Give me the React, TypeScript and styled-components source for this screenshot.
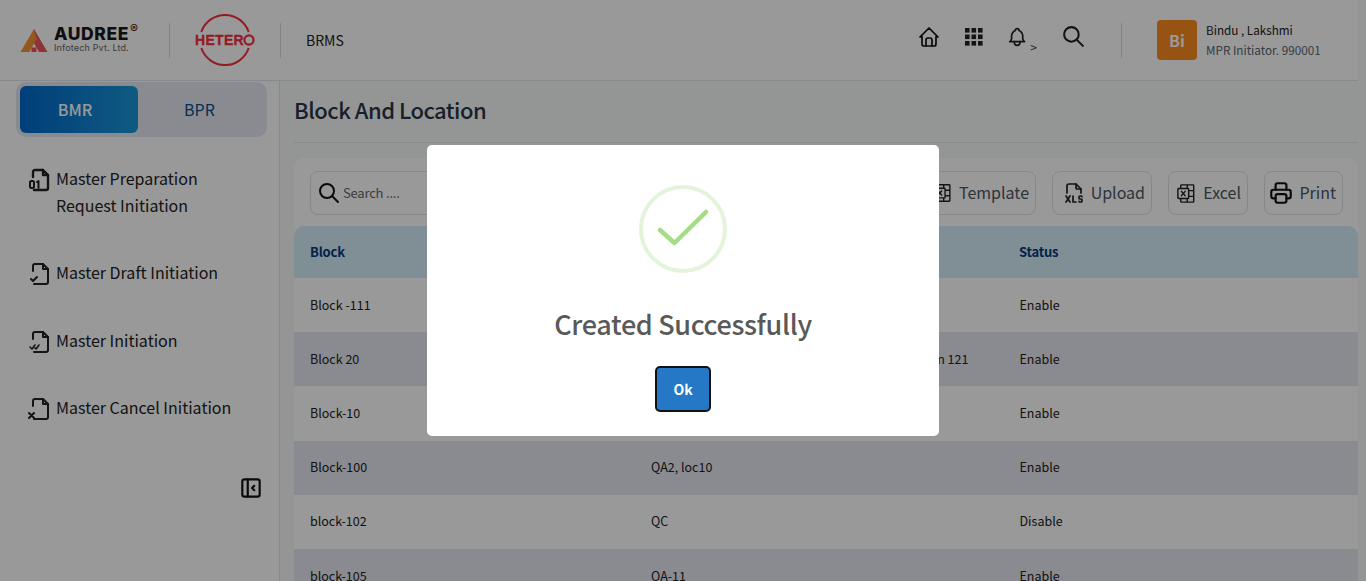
import { FC, ReactNode } from 'react';
import styled, { createGlobalStyle } from 'styled-components';
import { PiMicrosoftExcelLogo } from 'react-icons/pi';
import {
  TbBell,
  TbFileTypeXls,
  TbHome,
  TbLayoutSidebarLeftCollapse,
  TbPrinter,
  TbSearch,
} from 'react-icons/tb';

const rows = [
  { block: 'Block -111', location: 'QA', status: 'Enable' },
  { block: 'Block 20', location: 'Granulation Area , Packing Manufacturing Location 121', status: 'Enable' },
  { block: 'Block-10', location: 'QA-10', status: 'Enable' },
  { block: 'Block-100', location: 'QA2, loc10', status: 'Enable' },
  { block: 'block-102', location: 'QC', status: 'Disable' },
  { block: 'block-105', location: 'QA-11', status: 'Enable' },
];

const FileIcon: FC<{ children?: ReactNode; weight?: number }> = ({ children, weight = 2 }) => (
  <svg width="24" height="24" viewBox="0 0 24 24" fill="none" stroke="#222" strokeWidth={weight} strokeLinecap="round" strokeLinejoin="round">
    <path d="M5 9V4a2 2 0 0 1 2-2h8l5 5v13a2 2 0 0 1-2 2H6" />
    <path d="M15 2v5h5" />
    {children}
  </svg>
);

const AudreeLogo = () => (
  <svg width="28" height="25" viewBox="0 0 28 25">
    <path d="M14 1 L27.5 24 H19 L11 10 Z" fill="#f0565c" />
    <path d="M14 1 L0.5 24 H9.5 L16.5 11 Z" fill="#f59331" />
    <rect x="11.5" y="19.5" width="5" height="4.5" fill="#f0565c" />
  </svg>
);

const HeteroLogo = () => (
  <svg width="62" height="52" viewBox="0 0 62 52">
    <path d="M7.3 18 A25 25 0 0 1 54.7 18" fill="none" stroke="#f5303c" strokeWidth="2" />
    <path d="M7.3 34 A25 25 0 0 0 54.7 34" fill="none" stroke="#f5303c" strokeWidth="2" />
    <circle cx="55" cy="26" r="4.6" fill="none" stroke="#f5303c" strokeWidth="2.2" />
    <text x="1" y="31" fontFamily="Liberation Sans" fontWeight="700" fontSize="14" letterSpacing="0.3" stroke="#f5303c" strokeWidth="0.3" fill="#f5303c">HETER</text>
  </svg>
);

const GridIcon = () => (
  <svg width="18" height="18" viewBox="0 0 18 18" fill="#222">
    {[0, 6.5, 13].map(y =>
      [0, 6.5, 13].map(x => <rect key={`${x}-${y}`} x={x} y={y} width="4.6" height="4.6" />),
    )}
  </svg>
);

export default function App() {
  return (
    <>
      <GlobalStyle />
      <Page>
        <Header>
          <BrandCell>
            <AudreeLogo />
            <BrandText>
              <BrandName>
                AUDREE<BrandMark>®</BrandMark>
              </BrandName>
              <BrandSub>Infotech Pvt. Ltd.</BrandSub>
            </BrandText>
          </BrandCell>
          <HeteroCell>
            <HeteroLogo />
          </HeteroCell>
          <AppName>BRMS</AppName>
          <HeaderIcons>
            <TbHome size={24} color="#111" strokeWidth={1.7} />
            <GridIcon />
            <BellWrap>
              <TbBell size={26} color="#222" strokeWidth={1.8} />
              <BellCaret>&gt;</BellCaret>
            </BellWrap>
            <TbSearch size={25} color="#222" />
          </HeaderIcons>
          <UserCell>
            <Avatar>Bi</Avatar>
            <div>
              <UserName>Bindu , Lakshmi</UserName>
              <UserRole>MPR Initiator. 990001</UserRole>
            </div>
          </UserCell>
        </Header>
        <Body>
          <Sidebar>
            <Toggle>
              <ToggleItem $active>BMR</ToggleItem>
              <ToggleItem>BPR</ToggleItem>
            </Toggle>
            <Menu>
              <MenuItem $height={94}>
                <FileIcon weight={2.4}>
                  <rect x="2" y="13" width="4" height="7" rx="1.5" strokeWidth="2" />
                  <path d="M9 14l1.5-1v7" strokeWidth="2" />
                </FileIcon>
                <span>Master Preparation Request Initiation</span>
              </MenuItem>
              <MenuItem $height={68}>
                <FileIcon>
                  <path d="M3 17l2 2 4-4" />
                </FileIcon>
                <span>Master Draft Initiation</span>
              </MenuItem>
              <MenuItem $height={67}>
                <FileIcon>
                  <path d="M2 17l2 2 3-4M7 18l1 1 3-4" strokeWidth="1.6" />
                </FileIcon>
                <span>Master Initiation</span>
              </MenuItem>
              <MenuItem $height={68}>
                <FileIcon>
                  <path d="M1 16l5 5M6 16l-5 5" />
                </FileIcon>
                <span>Master Cancel Initiation</span>
              </MenuItem>
            </Menu>
            <CollapseRow>
              <TbLayoutSidebarLeftCollapse size={26} color="#111" />
            </CollapseRow>
          </Sidebar>
          <Main>
            <Title>Block And Location</Title>
            <Panel>
              <Toolbar>
                <SearchBox>
                  <TbSearch size={24} color="#111" />
                  <SearchText>Search ....</SearchText>
                </SearchBox>
                <ToolButton $width={115}>
                  <PiMicrosoftExcelLogo size={22} color="#222" />
                  <span>Template</span>
                </ToolButton>
                <ToolButton $width={100}>
                  <TbFileTypeXls size={24} color="#222" strokeWidth={1.7} />
                  <span>Upload</span>
                </ToolButton>
                <ToolButton $width={80}>
                  <PiMicrosoftExcelLogo size={23} color="#222" />
                  <span>Excel</span>
                </ToolButton>
                <ToolButton $width={79}>
                  <TbPrinter size={26} color="#111" />
                  <span>Print</span>
                </ToolButton>
              </Toolbar>
              <HeadRow>
                <span>Block</span>
                <span>Location</span>
                <span>Status</span>
              </HeadRow>
              {rows.map((row, i) => (
                <Row key={row.block} $shaded={i % 2 === 1}>
                  <span>{row.block}</span>
                  <span>{row.location}</span>
                  <span>{row.status}</span>
                </Row>
              ))}
            </Panel>
          </Main>
        </Body>
      </Page>
      <Overlay>
        <Modal>
          <CheckCircle>
            <svg width="56" height="44" viewBox="0 0 56 44" fill="none">
              <path d="M5 23 L19.5 36 L51 5" stroke="#a5dc86" strokeWidth="4.5" strokeLinecap="round" strokeLinejoin="round" />
            </svg>
          </CheckCircle>
          <ModalTitle>Created Successfully</ModalTitle>
          <OkButton>Ok</OkButton>
        </Modal>
      </Overlay>
    </>
  );
}

const GlobalStyle = createGlobalStyle`
  html, body {
    margin: 0;
    height: 100%;
    overflow: hidden;
  }
  body {
    font-family: "Noto Sans CJK SC", "Noto Sans", sans-serif;
    color: #222;
    background: #f7fafa;
  }
  * {
    box-sizing: border-box;
  }
`;
const Page = styled.div`
  width: 1366px;
  height: 581px;
  overflow: hidden;
  display: flex;
  flex-direction: column;
`;
const Header = styled.header`
  width: 1358px;
  height: 81px;
  flex: none;
  display: flex;
  align-items: center;
  background: #fff;
  border-bottom: 1px solid #e2e4ea;
`;
const BrandCell = styled.div`
  width: 170px;
  height: 35px;
  padding-left: 20px;
  display: flex;
  align-items: center;
  gap: 6px;
  border-right: 1px solid #dcdcdc;
`;
const BrandText = styled.div`
  font-family: "Inter", sans-serif;
  margin-top: -2px;
`;
const BrandName = styled.div`
  position: relative;
  font-size: 17.5px;
  line-height: 18px;
  font-weight: 800;
  color: #1a1a1a;
  letter-spacing: 0.6px;
`;
const BrandMark = styled.span`
  position: absolute;
  top: -5px;
  left: 76px;
  font-size: 12px;
  font-weight: 500;
`;
const BrandSub = styled.div`
  font-size: 9px;
  line-height: 10px;
  color: #666;
  letter-spacing: 0.15px;
  white-space: nowrap;
`;
const HeteroCell = styled.div`
  width: 111px;
  height: 35px;
  padding-left: 24px;
  display: flex;
  align-items: center;
  border-right: 1px solid #dcdcdc;
`;
const AppName = styled.div`
  margin-left: 25px;
  width: 611px;
  font-size: 14px;
  color: #222;
`;
const HeaderIcons = styled.div`
  width: 204px;
  height: 35px;
  display: flex;
  align-items: center;
  gap: 24px;
  margin-top: -7px;
`;
const BellWrap = styled.div`
  display: flex;
  align-items: flex-end;
  width: 31px;
  margin-left: -1px;
`;
const BellCaret = styled.span`
  font-size: 12px;
  line-height: 12px;
  margin-left: 2px;
  margin-bottom: -3px;
  color: #4a3a2a;
`;
const UserCell = styled.div`
  height: 35px;
  display: flex;
  align-items: center;
  gap: 9px;
  padding-left: 35px;
  border-left: 1px solid #dcdcdc;
`;
const Avatar = styled.div`
  width: 40px;
  height: 40px;
  border-radius: 4px;
  background: #fb8b1e;
  color: #fff;
  font-size: 16px;
  font-weight: 700;
  display: grid;
  place-items: center;
`;
const UserName = styled.div`
  font-size: 11.7px;
  line-height: 20px;
  color: #222;
`;
const UserRole = styled.div`
  font-size: 11.7px;
  line-height: 20px;
  color: #5a6472;
`;
const Body = styled.div`
  flex: 1;
  display: flex;
  min-height: 0;
`;
const Sidebar = styled.aside`
  width: 280px;
  flex: none;
  background: #fff;
  border-right: 1px solid #e2e4ea;
  padding: 1px 12px 0 16px;
`;
const Toggle = styled.div`
  height: 55px;
  padding: 4px;
  display: grid;
  grid-template-columns: 118px 1fr;
  border-radius: 10px;
  background: #e6e8f0;
`;
const ToggleItem = styled.div<{ $active?: boolean }>`
  display: grid;
  place-items: center;
  padding-bottom: 2px;
  padding-right: ${({ $active }) => ($active ? '8px' : '2px')};
  border-radius: 6px;
  font-size: 16px;
  font-weight: ${({ $active }) => ($active ? 500 : 400)};
  color: ${({ $active }) => ($active ? '#fff' : '#0b4f8a')};
  background: ${({ $active }) =>
    $active ? 'linear-gradient(90deg, #0069cc, #1a97d8)' : 'transparent'};
`;
const Menu = styled.nav`
  margin-top: 28px;
`;
const MenuItem = styled.div<{ $height: number }>`
  height: ${({ $height }) => $height}px;
  display: flex;
  align-items: flex-start;
  gap: 4px;
  padding: 0 20px 0 12px;
  font-size: 16px;
  line-height: 27px;
  color: #222;
  svg {
    flex: none;
    margin-top: 3px;
  }
`;
const CollapseRow = styled.div`
  display: flex;
  justify-content: flex-end;
  padding-top: 13px;
  margin-right: 3px;
`;
const Main = styled.main`
  flex: 1;
  min-width: 0;
  padding: 0 8px 0 14px;
`;
const Title = styled.h1`
  margin: 0;
  height: 62px;
  padding-bottom: 5px;
  display: flex;
  align-items: center;
  font-size: 22px;
  font-weight: 500;
  letter-spacing: -0.5px;
  color: #2a3444;
  border-bottom: 1px solid #e2e4ea;
`;
const Panel = styled.section`
  margin-top: 15px;
  border-radius: 10px 10px 0 0;
  background: #fff;
`;
const Toolbar = styled.div`
  height: 68px;
  padding: 13px 15px 11px 16px;
  display: flex;
  gap: 16px;
`;
const SearchBox = styled.div`
  flex: 1;
  display: flex;
  align-items: center;
  gap: 2px;
  padding-left: 6px;
  border: 1px solid #dfe1e6;
  border-radius: 8px;
`;
const SearchText = styled.span`
  font-size: 13px;
  letter-spacing: -0.2px;
  padding-bottom: 2px;
  color: #666;
`;
const ToolButton = styled.div<{ $width: number }>`
  width: ${({ $width }) => $width}px;
  display: flex;
  align-items: center;
  justify-content: flex-end;
  gap: 5px;
  padding-right: 6px;
  font-size: 16px;
  color: #4b5563;
  border: 1px solid #dfe1e6;
  border-radius: 8px;
  span {
    padding-bottom: 3px;
  }
`;
const HeadRow = styled.div`
  height: 52px;
  display: grid;
  grid-template-columns: 341px 368px 1fr;
  align-items: center;
  padding: 0 0 1px 16px;
  border-radius: 10px 10px 0 0;
  font-size: 13px;
  font-weight: 600;
  letter-spacing: -0.2px;
  color: #063a7a;
  background: #d5edfa;
`;
const Row = styled.div<{ $shaded: boolean }>`
  height: 54.2px;
  display: grid;
  grid-template-columns: 341px 368.5px 1fr;
  align-items: center;
  padding: 0 0 2px 16px;
  font-size: 12.5px;
  color: #222;
  background: ${({ $shaded }) => ($shaded ? '#e6e8f0' : '#fff')};
`;
const Overlay = styled.div`
  position: fixed;
  inset: 0;
  display: flex;
  align-items: center;
  justify-content: center;
  background: rgba(0, 0, 0, 0.4);
`;
const Modal = styled.div`
  width: 512px;
  height: 291px;
  padding-top: 40px;
  display: flex;
  flex-direction: column;
  align-items: center;
  border-radius: 5px;
  background: #fff;
`;
const CheckCircle = styled.div`
  width: 88px;
  height: 88px;
  flex: none;
  display: grid;
  place-items: center;
  border-radius: 50%;
  border: 4px solid rgba(165, 220, 134, 0.3);
`;
const ModalTitle = styled.h2`
  margin: 29px 0 0;
  font-size: 27px;
  line-height: 44px;
  font-weight: 500;
  color: #595959;
  letter-spacing: -0.35px;
`;
const OkButton = styled.button`
  margin-top: 20px;
  width: 56px;
  height: 46px;
  border: 2px solid #111;
  border-radius: 5px;
  background: #2478c6;
  color: #fff;
  font-family: inherit;
  font-size: 14px;
  font-weight: 700;
`;
